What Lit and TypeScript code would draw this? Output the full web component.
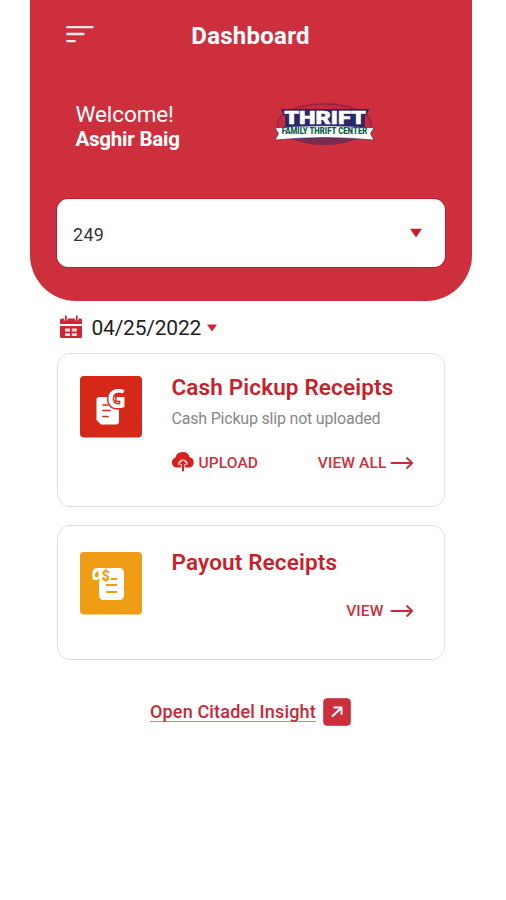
import { LitElement, html, css } from "lit";
import { customElement } from "lit/decorators.js";

const arrow = html`<svg class="arrow" width="24" height="14" viewBox="0 0 24 14" fill="none" stroke="#c9283a" stroke-width="1.8" stroke-linecap="round" stroke-linejoin="round"><path d="M1.5 7H22M17 2l5.2 5L17 12"/></svg>`;

const menuIcon = html`<svg width="28" height="19" viewBox="0 0 28 19" stroke="#ffe9ea" stroke-width="2.3" stroke-linecap="round"><path d="M1.2 2.2H26.6M1.2 9H17.6M1.2 16.2H8.8"/></svg>`;

const logo = html`<svg class="logo" width="102" height="44" viewBox="0 0 100 44" preserveAspectRatio="none">
  <ellipse cx="49.5" cy="21" rx="46" ry="20" fill="#c6283c" stroke="#8d2546" stroke-width="1.3"/>
  <path d="M7 6H93L91 12H89V25H11V12H9Z" fill="#2b2767"/>
  <path d="M15 33Q49 37 84 33Q72 42 49.5 42Q27 42 15 33Z" fill="#7c2b50"/>
  <text x="50" y="21" text-anchor="middle" textLength="80" lengthAdjust="spacingAndGlyphs" font-family="Roboto, sans-serif" font-size="17.5" font-weight="900" fill="#fff" stroke="#fff" stroke-width=".5">THRIFT</text>
  <path d="M1 25Q49 20.500 98 25L94.5 30.5L98 37Q49 32 1 37L4.500 30.5Z" fill="#fff" stroke="#2b2767" stroke-width=".6"/>
  <text x="49.5" y="31.5" text-anchor="middle" textLength="84" lengthAdjust="spacingAndGlyphs" font-family="Roboto, sans-serif" font-size="8.5" font-weight="900" fill="#0d5b4b">FAMILY THRIFT CENTER</text>
</svg>`;

const calendar = html`<svg class="cal" width="24" height="24" viewBox="0 0 24 24">
  <path d="M3 3.500H21.500Q23 3.500 23 5V9H1V5Q1 3.500 3 3.500Z" fill="#d02633"/>
  <path d="M6.800 1V5.500M17.800 1V5.500" stroke="#fff" stroke-width="3.400"/>
  <path d="M6.800 1V6M17.800 1V6" stroke="#d02633" stroke-width="1.700" stroke-linecap="round"/>
  <path d="M1 11H23V21.500Q23 23 21.500 23H2.500Q1 23 1 21.500Z" fill="#d02633"/>
  <path d="M6 13.500h5v3h-5zM12.800 13.500h5v3h-5zM6 18.200h5v2.800h-5zM12.800 18.200h5v2.800h-5z" fill="#ffe4e4"/>
</svg>`;

const caret = html`<svg class="caret" width="14" height="10" viewBox="0 0 14 10"><path d="M1 .8H13L7 9.500Z" fill="#c8202f"/></svg>`;

const cloud = html`<svg class="cloud" width="24" height="21" viewBox="0 0 24 21">
  <path d="M5.500 16.500A5 5 0 0 1 4.300 6.800A7.500 7.500 0 0 1 18.800 6.300A5.200 5.200 0 0 1 18.200 16.500Z" fill="#d3221f"/>
  <path d="M7 13.5Q7.500 8.500 12 8.500Q16.500 8.500 17 13.5L14.200 14V17H9.800V14Z" fill="#f6c4c0"/>
  <path d="M8.200 13.200L12 9.300L15.800 13.200Z" fill="#d3221f"/>
  <path d="M12 11V19.500" stroke="#d3221f" stroke-width="2" stroke-linecap="round"/>
</svg>`;

const cashTile = html`<svg class="tile" width="64" height="64" viewBox="0 0 64 64">
  <rect x="1" y="1" width="62" height="61.500" rx="4" fill="#d62818"/>
  <path d="M20 22H40V46.500Q40 49.500 37 49.500H22L17.500 45V24.500Q17.500 22 20 22Z" fill="#fff"/>
  <path d="M24 30H29M24 35.500H31M24 41.500H29" stroke="#d62818" stroke-width="1.700" stroke-linecap="round"/>
  <text x="28" y="33" font-family="Open Sans, sans-serif" font-size="27" font-weight="700" fill="#fff" stroke="#d62818" stroke-width="3" paint-order="stroke">G</text>
</svg>`;

const payoutTile = html`<svg class="tile" width="64" height="64" viewBox="0 0 64 64">
  <rect x="1" y="1" width="62" height="62.500" rx="4" fill="#ef9d14"/>
  <path d="M18 17H40Q45 17 45 22V44Q45 49 40 49H25Q20 49 20 44V29H14Q11.500 17 18 17Z" fill="#fff"/>
  <path d="M19 20.500Q15.500 22 16.500 25.500H19ZM20 30V27" fill="#ef9d14" stroke="#ef9d14"/>
  <text x="22.500" y="30" font-family="Roboto, sans-serif" font-size="14.500" font-weight="900" fill="#ef9d14">$</text>
  <path d="M32 28H38M27 34H38M27 41H38" stroke="#ef9d14" stroke-width="2"/>
</svg>`;

@customElement("app-root")
export class AppRoot extends LitElement {
  static styles = css`
    :host { display: block; height: 900px; background: #fff; overflow: hidden; font-family: Roboto, sans-serif; }
    * { box-sizing: border-box; }
    svg { display: block; flex: none; overflow: visible; }
    .page { width: 442px; margin-left: 29.500px; }
    header { height: 300.500px; background: #cd303c; border-radius: 0 0 46px 46px; padding: 0 27px 0 27.500px; color: #fff; }
    .bar { height: 69px; display: grid; grid-template-columns: 1fr auto 1fr; align-items: center; padding: 0 9px 0 8.500px; }
    .bar h1 { margin: 2px 0 0; font-size: 24px; line-height: 28px; font-weight: 700; letter-spacing: .25px; }
    .intro { height: 130px; display: flex; justify-content: space-between; padding: 33px 69px 0 18.500px; }
    .logo { margin-top: 1px; }
    .hello { font-size: 22.500px; line-height: 25px; margin: 0; letter-spacing: -.1px; }
    .name { font-size: 20.500px; line-height: 25px; font-weight: 700; margin: 0; letter-spacing: -.22px; }
    .select { height: 68px; border-radius: 11px; background: #fff; display: flex; align-items: center; justify-content: space-between; padding: 3px 22px 0 16px; font-size: 18px; letter-spacing: .3px; color: #333; box-shadow: 0 0 0 1px #bf1d2b; }
    .select .caret { margin-bottom: 4px; }
    main { padding: 0 27px 0 27.500px; }
    .date { display: flex; align-items: center; height: 52px; padding: 2px 0 0 1.500px; font-size: 21px; letter-spacing: -.22px; color: #222; }
    .date span { margin: 0 6px 0 9px; }
    .cal { margin-bottom: 2px; }
    .card { border: 1.500px solid #e0e0e0; border-radius: 13px; display: flex; }
    .cash { height: 154px; padding: 21px 29px 0 21.500px; }
    .payout { height: 135px; padding: 25px 29px 0 21.500px; margin-top: 18px; }
    .tile { margin: 0 0 0 -.5px; }
    .body { flex: 1; margin-left: 28.500px; }
    .card h2 { margin: -1px 0 0; font-size: 22.500px; line-height: 26px; font-weight: 600; letter-spacing: .14px; color: #c81f2c; white-space: nowrap; }
    .payout h2 { margin-top: -1.500px; }
    .sub { margin: 9px 0 0; font-size: 16px; line-height: 20px; letter-spacing: -.2px; color: #888; white-space: nowrap; }
    .actions { display: flex; align-items: center; height: 24px; margin-right: 1px; font-size: 15.500px; font-weight: 500; letter-spacing: .13px; color: #cd3040; }
    .cash .actions { justify-content: space-between; margin-top: 22px; }
    .payout .actions { justify-content: flex-end; margin-top: 23.500px; }
    .act { display: flex; align-items: center; white-space: nowrap; }
    .cloud { margin: -2px 0 0 -.5px; }
    .cash .arrow { margin-left: 3px; }
    .payout .arrow { margin-left: 6px; }
    .up span { margin-left: 3.500px; }
    .open { display: flex; align-items: center; margin: 38px 0 0 93px; font-size: 18px; font-weight: 500; letter-spacing: .16px; color: #c9283a; }
    .open a { border-bottom: 1.500px solid #dc7d87; line-height: 18px; padding-top: 1px; white-space: nowrap; }
    .open svg { margin-left: 7px; }
  `;

  render() {
    return html`<div class="page">
      <header>
        <div class="bar">${menuIcon}<h1>Dashboard</h1></div>
        <div class="intro">
          <div><p class="hello">Welcome!</p><p class="name">Asghir Baig</p></div>
          ${logo}
        </div>
        <div class="select"><span>249</span>${caret}</div>
      </header>
      <main>
        <div class="date">${calendar}<span>04/25/2022</span><svg width="10" height="8" viewBox="0 0 10 8"><path d="M0 .5H10L5 7.500Z" fill="#d02633"/></svg></div>
        <section class="card cash">
          ${cashTile}
          <div class="body">
            <h2>Cash Pickup Receipts</h2>
            <p class="sub">Cash Pickup slip not uploaded</p>
            <div class="actions">
              <div class="act up">${cloud}<span>UPLOAD</span></div>
              <div class="act"><span>VIEW ALL</span>${arrow}</div>
            </div>
          </div>
        </section>
        <section class="card payout">
          ${payoutTile}
          <div class="body">
            <h2>Payout Receipts</h2>
            <div class="actions"><div class="act"><span>VIEW</span>${arrow}</div></div>
          </div>
        </section>
        <div class="open"><a>Open Citadel Insight</a>
          <svg width="28" height="28" viewBox="0 0 28 28"><rect x=".8" y=".8" width="26.400" height="26.400" rx="3" fill="#cd303c" stroke="#c51f2e"/><path d="M9 18.500L18.200 10M10.500 9.500H18.500V17" fill="none" stroke="#fff" stroke-width="1.900"/></svg>
        </div>
      </main>
    </div>`;
  }
}
